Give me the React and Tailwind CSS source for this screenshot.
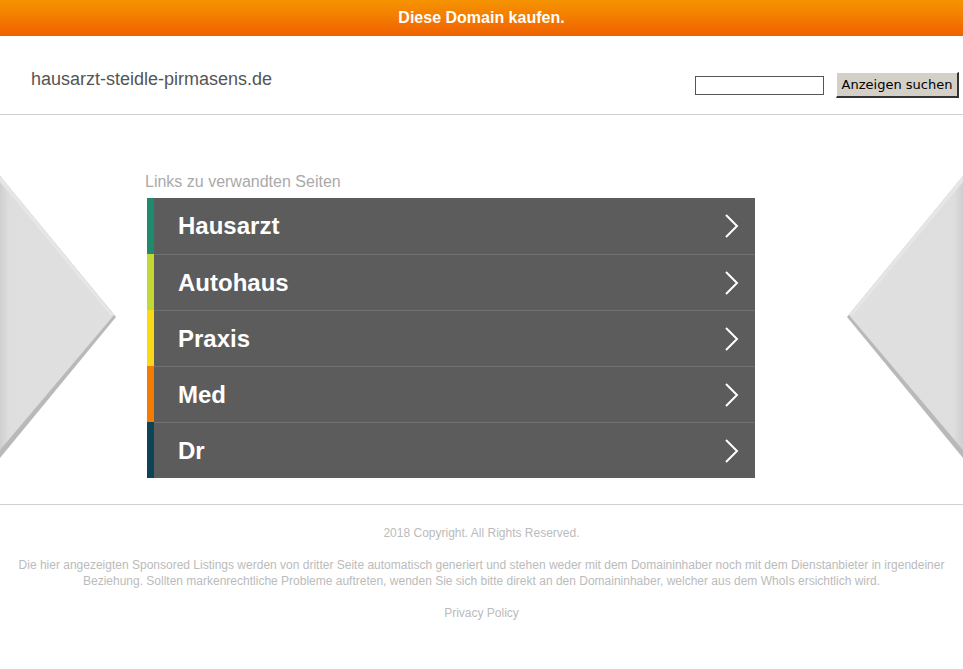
const links = [
  { label: 'Hausarzt', color: 'bg-[#1e8b6f]' },
  { label: 'Autohaus', color: 'bg-[#c2d934]' },
  { label: 'Praxis', color: 'bg-[#fbd915]' },
  { label: 'Med', color: 'bg-[#f57a00]' },
  { label: 'Dr', color: 'bg-[#0c4355]' },
];

const Chevron = () => (
  <svg width="16" height="26" viewBox="0 0 16 26" className="mr-[15px]">
    <polyline points="2,2 13,13 2,24" fill="none" stroke="#fff" strokeWidth="2" />
  </svg>
);

const Arrow = ({ flip }) => (
  <svg width="117" height="282" viewBox="0 0 117 282" className={flip ? 'scale-x-[-1]' : ''}>
    <defs>
      <linearGradient id={flip ? 'fr' : 'fl'} x1="0" y1="0" x2="1" y2="0">
        <stop offset="0" stopColor="#cfcfcf" />
        <stop offset="0.08" stopColor="#dedede" />
        <stop offset="1" stopColor="#e0e0e0" />
      </linearGradient>
    </defs>
    <polygon points="0,0 116,141 0,282" fill="#b9b9b9" />
    <polygon points="0,0 114,139 0,274" fill={`url(#${flip ? 'fr' : 'fl'})`} />
    <polygon points="0,0 114,139 110,139 0,6" fill="#e6e6e6" />
  </svg>
);

export default function App() {
  return (
    <div className="min-h-[669px] bg-white font-['Liberation_Sans',Arial,sans-serif]">
      {/* Top bar */}
      <div className="h-9 flex items-center justify-center bg-gradient-to-b from-[#f69400] to-[#f06000] text-white font-bold text-base">
        Diese Domain kaufen.
      </div>

      {/* Header */}
      <div className="h-[79px] flex items-start justify-between border-b border-[#d0d0d0]">
        <div className="ml-[31px] mt-[32px] text-[18px] leading-[22px] text-[#555]">hausarzt-steidle-pirmasens.de</div>
        <div className="flex items-center mt-[36px] mr-[4px]">
          <input type="text" className="w-[129px] h-[19px] border border-[#555] bg-white" />
          <button className="ml-[12px] w-[123px] h-[26px] px-0 bg-[#d4d0c8] text-[13px] text-black font-['DejaVu_Sans',sans-serif] border-r-2 border-b-2 border-[#333] border-t border-l border-t-white border-l-white">
            Anzeigen suchen
          </button>
        </div>
      </div>

      {/* Main */}
      <div className="flex items-start h-[390px] border-b border-[#d0d0d0]">
        <div className="mt-[61px]"><Arrow /></div>
        <div className="ml-[28px] w-[610px] mt-[57px]">
          <div className="text-[#aaa] text-base leading-[20px] mb-[6px]">Links zu verwandten Seiten</div>
          <div className="ml-[2px]">
            {links.map((l, i) => (
              <div key={l.label} className="flex h-[56px] bg-[#5c5c5c]">
                <div className={`w-[7px] ${l.color}`} />
                <div className={`flex-1 flex items-center justify-between ${i > 0 ? 'border-t border-[#707070]' : ''}`}>
                  <span className="ml-[24px] text-white font-bold text-[24px]">{l.label}</span>
                  <Chevron />
                </div>
              </div>
            ))}
          </div>
        </div>
        <div className="flex-1" />
        <div className="mt-[61px]"><Arrow flip /></div>
      </div>

      {/* Footer */}
      <div className="pt-[20px] px-[15px] text-center text-[12px] leading-[16px] text-[#bbb]">
        <p>2018 Copyright. All Rights Reserved.</p>
        <p className="mt-[16px]">
          Die hier angezeigten Sponsored Listings werden von dritter Seite automatisch generiert und stehen weder mit dem Domaininhaber noch mit dem Dienstanbieter in irgendeiner Beziehung. Sollten markenrechtliche Probleme auftreten, wenden Sie sich bitte direkt an den Domaininhaber, welcher aus dem WhoIs ersichtlich wird.
        </p>
        <p className="mt-[16px]">Privacy Policy</p>
      </div>
    </div>
  );
}
